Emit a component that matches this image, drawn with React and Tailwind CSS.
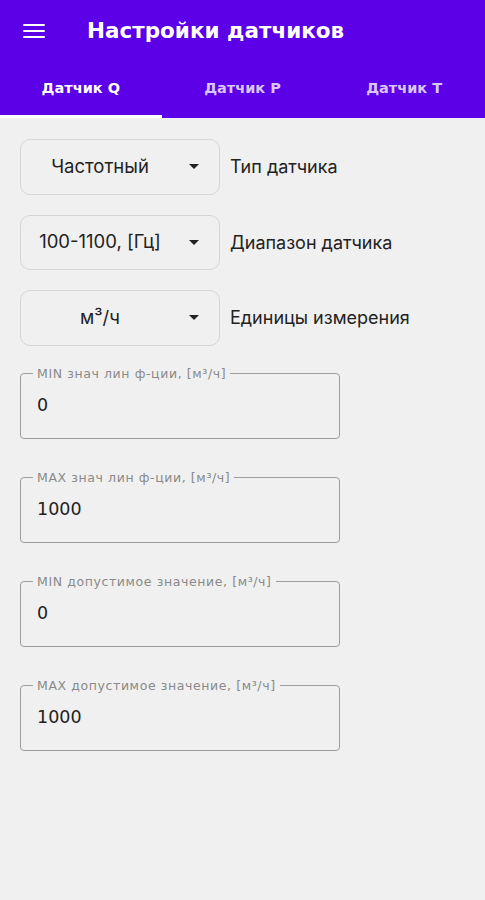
import React from 'react'

const wide = { fontFamily: '"DejaVu Sans", "Noto Sans", sans-serif' }
const body = { fontFamily: 'Inter, "Noto Sans", sans-serif' }

const selects = [
  { value: 'Частотный', label: 'Тип датчика' },
  { value: '100-1100, [Гц]', label: 'Диапазон датчика' },
  { value: 'м³/ч', label: 'Единицы измерения' },
]

const fields = [
  { label: 'MIN знач лин ф-ции, [м³/ч]', value: '0' },
  { label: 'MAX знач лин ф-ции, [м³/ч]', value: '1000' },
  { label: 'MIN допустимое значение, [м³/ч]', value: '0' },
  { label: 'MAX допустимое значение, [м³/ч]', value: '1000' },
]

function Select({ value, label }) {
  return (
    <div className="flex items-center gap-[10px]">
      <div className="flex items-center w-[200px] h-[55.5px] rounded-[10px] border border-[#d6d6d6] pr-[10px]">
        <span className="flex-1 text-center text-[18.5px] text-[#222]" style={body}>{value}</span>
        <span className="w-[30px] flex justify-center">
          <span className="w-0 h-0 border-l-[5px] border-r-[5px] border-t-[5px] border-l-transparent border-r-transparent border-t-[#222]" />
        </span>
      </div>
      <span className="text-[18px] text-[#222]" style={body}>{label}</span>
    </div>
  )
}

function Field({ label, value }) {
  return (
    <fieldset className="w-[320px] h-[71px] border-[1.5px] border-[#9c9c9c] rounded-[4px] pl-4 pr-3 m-0">
      <legend className="px-1 -ml-1 text-[12.5px] leading-[12px] tracking-[0.6px] text-[#8a8a8a]" style={wide}>{label}</legend>
      <div className="pt-[12px] text-[17.5px] text-[#222]" style={wide}>{value}</div>
    </fieldset>
  )
}

export default function App() {
  return (
    <div className="w-[485px] min-h-[900px] bg-[#f0f0f0]">
      <div className="bg-[#5c00e8] text-white">
        <div className="h-[62px] flex items-center pl-[23px]">
          <div className="flex flex-col gap-[3.5px] w-[22px]">
            <span className="h-[2.5px] bg-white rounded" />
            <span className="h-[2.5px] bg-white rounded" />
            <span className="h-[2.5px] bg-white rounded" />
          </div>
          <h1 className="ml-[42px] text-[21.5px] font-bold" style={wide}>Настройки датчиков</h1>
        </div>
        <div className="grid grid-cols-3 h-[56px]">
          <div className="flex flex-col">
            <div className="flex-1 flex items-center justify-center text-[14.5px] font-bold" style={wide}>Датчик Q</div>
            <div className="h-[3px] bg-white" />
          </div>
          <div className="flex items-center justify-center pb-[3px] text-[14.5px] font-bold text-[#d9c6fb]" style={wide}>Датчик P</div>
          <div className="flex items-center justify-center pb-[3px] text-[14.5px] font-bold text-[#d9c6fb]" style={wide}>Датчик T</div>
        </div>
      </div>
      <div className="px-5 pt-[21px] flex flex-col gap-[20px]">
        {selects.map(s => <Select key={s.label} {...s} />)}
      </div>
      <div className="px-5 pt-[22px] flex flex-col gap-[33px]">
        {fields.map(f => <Field key={f.label} {...f} />)}
      </div>
    </div>
  )
}
